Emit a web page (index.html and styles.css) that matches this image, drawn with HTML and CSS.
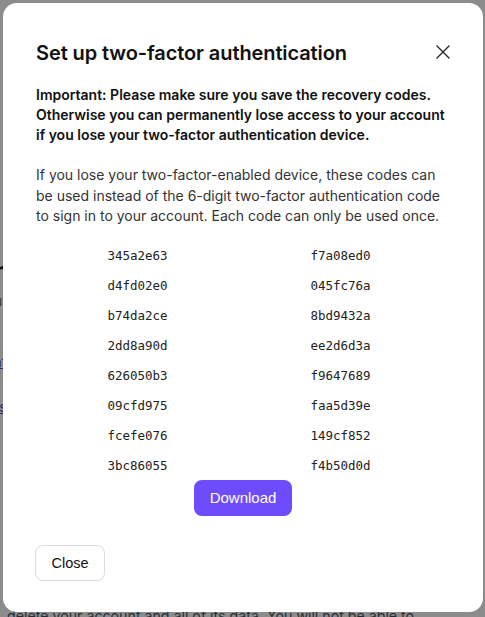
FILE: index.html
```html
<!DOCTYPE html>
<html lang="en">
<head>
<meta charset="utf-8">
<title>Set up two-factor authentication</title>
<link rel="stylesheet" href="styles.css">
</head>
<body>
<div class="page">
  <p class="bg-line">Download recovery codes to store them safe</p>
  <h2 class="bg-heading">Two-factor authentication</h2>
  <p class="bg-small">Status</p>
  <a class="bg-link bg-link1" href="#">Enable two-factor authentication</a>
  <a class="bg-link bg-link2" href="#">Recovery codes</a>
  <h2 class="bg-heading bg-heading2">Delete account</h2>
  <p class="bg-text">. delete your account and all of its data. You will not be able to</p>
</div>
<div class="overlay"></div>
<div class="modal" role="dialog" aria-labelledby="mtitle">
  <div class="modal-header">
    <h1 id="mtitle" class="modal-title">Set up two-factor authentication</h1>
    <button class="icon-close" aria-label="Close">
      <svg width="14" height="14" viewBox="0 0 14 14"><path d="M1 1L13 13M13 1L1 13" stroke="#222" stroke-width="1.3" fill="none" stroke-linecap="round"/></svg>
    </button>
  </div>
  <p class="warn">Important: Please make sure you save the recovery codes. Otherwise you can permanently lose access to your account if you lose your two-factor authentication device.</p>
  <p class="info">If you lose your two-factor-enabled device, these codes can be used instead of the 6-digit two-factor authentication code to sign in to your account. Each code can only be used once.</p>
  <div class="codes">
    <span>345a2e63</span><span>f7a08ed0</span>
    <span>d4fd02e0</span><span>045fc76a</span>
    <span>b74da2ce</span><span>8bd9432a</span>
    <span>2dd8a90d</span><span>ee2d6d3a</span>
    <span>626050b3</span><span>f9647689</span>
    <span>09cfd975</span><span>faa5d39e</span>
    <span>fcefe076</span><span>149cf852</span>
    <span>3bc86055</span><span>f4b50d0d</span>
  </div>
  <div class="download-row">
    <button class="btn-primary">Download</button>
  </div>
  <div class="footer">
    <button class="btn-secondary">Close</button>
  </div>
</div>
</body>
</html>
```
FILE: styles.css
```css
* { box-sizing: border-box; }
html, body { margin: 0; padding: 0; }
body {
  font-family: Inter, "Noto Sans", "Liberation Sans", sans-serif;
  background: #fff;
  width: 485px;
  height: 617px;
  overflow: hidden;
}
.page {
  margin-left: -300px;
  width: 800px;
  padding-top: 139px;
  color: #1f2937;
}
.bg-line { margin: 0; font-size: 16px; line-height: 22px; padding-left: 40px; }
.bg-heading { margin: 95px 0 0; font-size: 24px; line-height: 30px; font-weight: 700; padding-left: 120px; color: #111827; }
.bg-small { margin: 5px 0 0; font-size: 14px; line-height: 20px; color: #6b7280; padding-left: 268px; }
.bg-link { display: block; color: #4f46e5; font-size: 14px; line-height: 20px; text-decoration: underline; padding-left: 110px; }
.bg-link1 { margin-top: 41px; }
.bg-link2 { margin-top: 25px; padding-left: 200px; }
.bg-heading2 { margin-top: 151px; padding-left: 100px; }
.bg-text { margin: 6px 0 0 299px; font-size: 14.2px; line-height: 24px; color: #4b5563; white-space: nowrap; }

.overlay {
  position: fixed;
  inset: 0;
  background: rgba(0, 0, 0, 0.45);
}
.modal {
  position: fixed;
  top: 3px;
  left: 3px;
  width: 480px;
  height: 609px;
  background: #fff;
  border-radius: 14px;
  padding: 36px 34px 31px 30px;
  display: flex;
  flex-direction: column;
}
.modal-header {
  display: flex;
  justify-content: space-between;
  align-items: center;
  height: 28px;
}
.modal-title {
  margin: 0 0 0 3px;
  font-size: 20px;
  line-height: 28px;
  font-weight: 600;
  color: #111;
  letter-spacing: -0.1px;
}
.icon-close {
  border: 0;
  background: none;
  padding: 0;
  width: 14px;
  height: 14px;
  display: flex;
  margin-right: -1px;
  margin-top: -2px;
}
.warn {
  margin: 18px 0 0 3px;
  font-size: 14px;
  line-height: 20px;
  font-weight: 600;
  color: #111;
}
.info {
  margin: 20px 0 0 3px;
  font-size: 14px;
  line-height: 20.5px;
  color: #333;
}
.codes {
  margin: 14px 7px 0 3px;
  display: grid;
  grid-template-columns: 1fr 1fr;
  grid-auto-rows: 30px;
  align-items: center;
  justify-items: center;
  font-family: "DejaVu Sans Mono", "Liberation Mono", monospace;
  font-size: 12.5px;
  color: #222;
}
.download-row {
  display: flex;
  justify-content: center;
  margin-top: -1px;
}
.btn-primary {
  height: 36px;
  width: 98px;
  border: 0;
  border-radius: 8px;
  background: #6e4cfe;
  color: #fff;
  font-family: "Liberation Sans", Arial, sans-serif;
  font-size: 15px;
  margin-left: 4px;
}
.footer {
  margin-top: auto;
  display: flex;
}
.btn-secondary {
  height: 36px;
  width: 70px;
  margin-left: 2px;
  border: 1px solid #dcdcdc;
  border-radius: 8px;
  background: #fff;
  color: #111;
  font-family: "Liberation Sans", Arial, sans-serif;
  font-size: 14.5px;
}
```
